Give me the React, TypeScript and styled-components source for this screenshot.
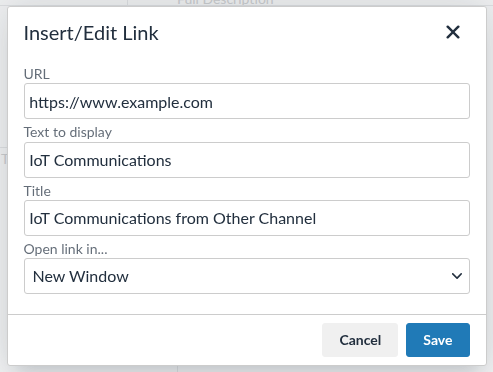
import React from "react";
import styled, { createGlobalStyle } from "styled-components";

const Global = createGlobalStyle`
  html, body { margin: 0; padding: 0; }
  body {
    width: 493px;
    height: 372px;
    overflow: hidden;
    background: #eff0f1;
    font-family: "Lato", "Noto Sans", sans-serif;
  }
  * { box-sizing: border-box; }
`;

const Page = styled.div`
  width: 493px;
  height: 372px;
  display: grid;
  grid-template-rows: 6px 1fr;
  color: #c9cbcd;
`;

const PageHead = styled.div`
  display: grid;
  grid-template-columns: 128px 1fr;
  border-bottom: 1px solid #dcdee0;
  overflow: hidden;
`;

const HeadCell = styled.div<{ $divider?: boolean }>`
  border-right: ${(p) => (p.$divider ? "1px solid #dcdee0" : "none")};
  padding-left: 49px;
  font-size: 14px;
  line-height: 14px;
  margin-top: -8px;
  white-space: nowrap;
`;

const PageBody = styled.div`
  display: grid;
  grid-template-columns: 178px 1fr;
`;

const SideCol = styled.div`
  border-right: 1px solid #dcdee0;
  padding-top: 141px;
`;

const SideRule = styled.div`
  border-top: 1px solid #dcdee0;
  font-size: 14px;
  padding-top: 2px;
  padding-left: 1px;
`;

const MainCol = styled.div``;

const Overlay = styled.div`
  position: fixed;
  inset: 0;
  display: flex;
  align-items: center;
  justify-content: center;
`;

const Dialog = styled.div`
  width: 480px;
  background: #fff;
  border: 1px solid #cccccc;
  border-radius: 3px;
  box-shadow: 0 16px 16px -10px rgba(34, 47, 62, 0.15),
    0 0 40px 1px rgba(34, 47, 62, 0.15);
  display: flex;
  flex-direction: column;
  color: #222f3e;
`;

const Header = styled.div`
  display: flex;
  align-items: center;
  justify-content: space-between;
  padding: 8px 16px 0 16px;
`;

const Title = styled.h1`
  margin: 0;
  font-size: 20px;
  font-weight: 400;
  line-height: 1.3;
  color: #222f3e;
`;

const IconButton = styled.button`
  width: 34px;
  height: 34px;
  padding: 0;
  border: 1px solid transparent;
  border-radius: 3px;
  background: transparent;
  display: flex;
  align-items: center;
  justify-content: center;
  cursor: pointer;
  svg { fill: #222f3e; }
`;

const Body = styled.div`
  padding: 16px;
  display: flex;
  flex-direction: column;
  gap: 4px;
`;

const Group = styled.div`
  display: flex;
  flex-direction: column;
  &:last-child { margin-bottom: 4px; }
`;

const Label = styled.label`
  font-size: 14px;
  line-height: 1.3;
  color: rgba(34, 47, 62, 0.7);
`;

const Input = styled.input`
  width: 100%;
  height: 36px;
  border: 1px solid #cccccc;
  border-radius: 3px;
  padding: 5px 4.75px;
  font-family: inherit;
  font-size: 16px;
  line-height: 24px;
  color: #222f3e;
  background: #fff;
  outline: none;
`;

const SelectWrap = styled.div`
  position: relative;
  display: flex;
`;

const Select = styled.select`
  appearance: none;
  width: 100%;
  height: 36px;
  border: 1px solid #cccccc;
  border-radius: 3px;
  padding: 5px 24px 5px 8px;
  font-family: inherit;
  font-size: 16px;
  line-height: 24px;
  color: #222f3e;
  background: #fff;
  outline: none;
`;

const Chevron = styled.span`
  position: absolute;
  right: 8px;
  top: 50%;
  transform: translateY(-50%);
  display: flex;
  pointer-events: none;
  svg { fill: #222f3e; }
`;

const Footer = styled.div`
  border-top: 1px solid #cccccc;
  padding: 8px 16px;
  display: flex;
  justify-content: flex-end;
  gap: 8px;
`;

const Button = styled.button<{ $primary?: boolean }>`
  font-family: inherit;
  font-size: 14px;
  font-weight: 700;
  line-height: 24px;
  padding: 4px 16px;
  border-radius: 3px;
  border: 1px solid ${(p) => (p.$primary ? "#207ab7" : "#f0f0f0")};
  background: ${(p) => (p.$primary ? "#207ab7" : "#f0f0f0")};
  color: ${(p) => (p.$primary ? "#fff" : "#222f3e")};
  cursor: pointer;
`;

export default function App() {
  return (
    <>
      <Global />
      <Page>
        <PageHead>
          <HeadCell $divider />
          <HeadCell>Full Description</HeadCell>
        </PageHead>
        <PageBody>
          <SideCol>
            <SideRule>Ti</SideRule>
          </SideCol>
          <MainCol />
        </PageBody>
      </Page>
      <Overlay>
        <Dialog role="dialog" aria-label="Insert/Edit Link">
          <Header>
            <Title>Insert/Edit Link</Title>
            <IconButton aria-label="Close">
              <svg width="28" height="28" viewBox="0 0 24 24">
                <path d="M17.3 8.2L13.4 12l3.9 3.8a1 1 0 0 1-1.5 1.5L12 13.4l-3.8 3.9a1 1 0 0 1-1.5-1.5l3.9-3.8-3.9-3.8a1 1 0 0 1 1.5-1.5l3.8 3.9 3.8-3.9a1 1 0 0 1 1.5 1.5z" />
              </svg>
            </IconButton>
          </Header>
          <Body>
            <Group>
              <Label>URL</Label>
              <Input defaultValue="https://www.example.com" />
            </Group>
            <Group>
              <Label>Text to display</Label>
              <Input defaultValue="IoT Communications" />
            </Group>
            <Group>
              <Label>Title</Label>
              <Input defaultValue="IoT Communications from Other Channel" />
            </Group>
            <Group>
              <Label>Open link in...</Label>
              <SelectWrap>
                <Select defaultValue="new">
                  <option value="current">Current Window</option>
                  <option value="new">New Window</option>
                </Select>
                <Chevron>
                  <svg width="10" height="10" viewBox="0 0 10 10">
                    <path d="M8.7 2.2c.3-.3.8-.3 1 0 .4.4.4.9 0 1.2L5.7 7.8c-.3.3-.9.3-1.2 0L.2 3.4a.8.8 0 0 1 0-1.2c.3-.3.8-.3 1.1 0L5 6l3.7-3.8z" />
                  </svg>
                </Chevron>
              </SelectWrap>
            </Group>
          </Body>
          <Footer>
            <Button>Cancel</Button>
            <Button $primary>Save</Button>
          </Footer>
        </Dialog>
      </Overlay>
    </>
  );
}
